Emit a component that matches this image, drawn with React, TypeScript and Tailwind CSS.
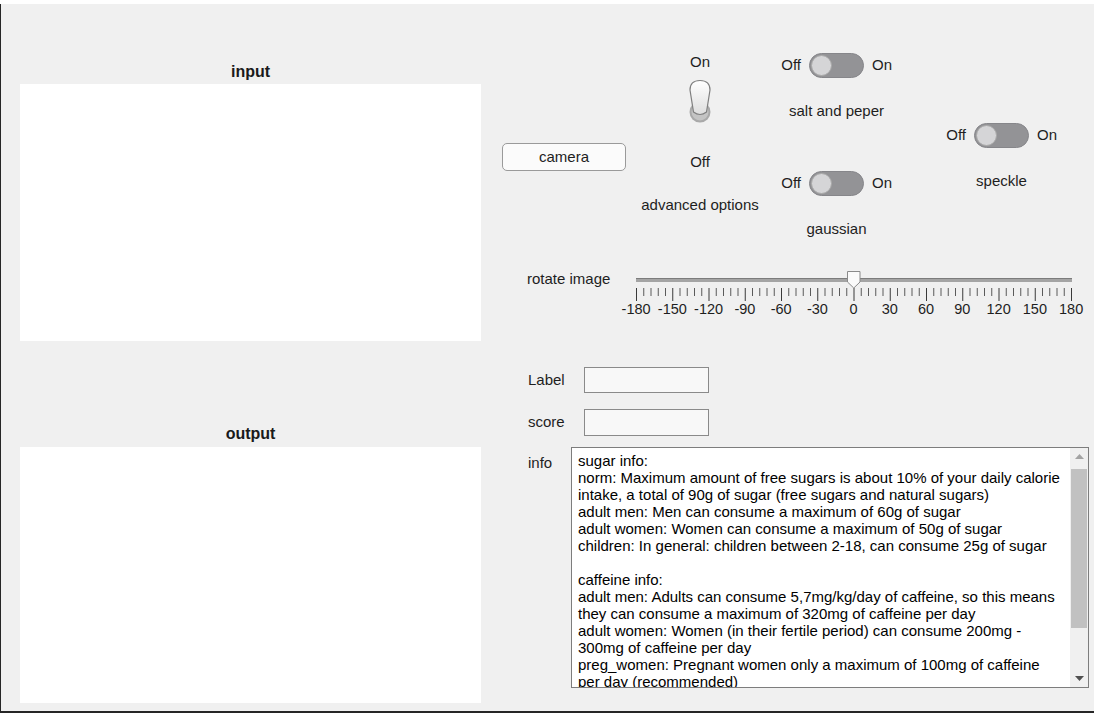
import React from 'react';

const infoLines = [
  'sugar info:',
  'norm: Maximum amount of free sugars is about 10% of your daily calorie',
  'intake, a total of 90g of sugar (free sugars and natural sugars)',
  'adult men: Men can consume a maximum of 60g of sugar',
  'adult women: Women can consume a maximum of 50g of sugar',
  'children: In general: children between 2-18, can consume 25g of sugar',
  '',
  'caffeine info:',
  'adult men: Adults can consume 5,7mg/kg/day of caffeine, so this means',
  'they can consume a maximum of 320mg of caffeine per day',
  'adult women: Women (in their fertile period) can consume 200mg -',
  '300mg of caffeine per day',
  'preg_women: Pregnant women only a maximum of 100mg of caffeine',
  'per day (recommended)',
];

const tickLabels = ['-180', '-150', '-120', '-90', '-60', '-30', '0', '30', '60', '90', '120', '150', '180'];

function Switch({ label }: { label: string }) {
  return (
    <div className="flex flex-col items-center">
      <div className="flex items-center">
        <span className="w-[40px] pr-[8px] text-right">Off</span>
        <div className="flex h-[25px] w-[55px] items-center rounded-full border border-[#86868a] bg-[#939396] px-[1px]">
          <div className="h-[21px] w-[21px] rounded-full border border-[#a9a9a9] bg-[#d5d5d7]" />
        </div>
        <span className="w-[40px] pl-[8px]">On</span>
      </div>
      <span className="mt-[24px] whitespace-nowrap leading-[18px]">{label}</span>
    </div>
  );
}

function Lever() {
  return (
    <svg width="26" height="44" viewBox="0 0 26 44">
      <defs>
        <linearGradient id="lev" x1="0" y1="0" x2="0" y2="1">
          <stop offset="0" stopColor="#ffffff" />
          <stop offset="1" stopColor="#dedede" />
        </linearGradient>
      </defs>
      <circle cx="13" cy="33" r="10.5" fill="#a9a9a9" />
      <circle cx="13" cy="33" r="8.5" fill="#c4c4c4" />
      <path d="M3 11 Q3 1.5 13 1.5 Q23 1.5 23 11 L19.5 33 Q13 38 6.5 33 Z" fill="url(#lev)" stroke="#7f7f7f" strokeWidth="1.2" />
    </svg>
  );
}

function Ticks() {
  const lines = [];
  for (let i = 0; i <= 60; i++) {
    const x = 0.5 + (i * 435) / 60;
    const major = i % 5 === 0;
    lines.push(
      <line key={i} x1={x} x2={x} y1={0} y2={major ? 13 : 8} stroke={major ? '#3a3a3a' : '#5a5a5a'} strokeWidth="1" />,
    );
  }
  return (
    <svg width="437" height="13" className="block">
      {lines}
    </svg>
  );
}

export default function App() {
  return (
    <div className="flex h-[713px] w-[1094px] flex-col bg-white font-['Liberation_Sans',Arial,sans-serif] text-[15px] text-[#1e1e1e]">
      <div className="h-[4px]" />
      <div className="flex flex-1 border-b-2 border-l border-[#262626] bg-[#f0f0f0]">
        {/* image panels */}
        <div className="ml-[19px] flex w-[461px] flex-col">
          <div className="mt-[59px] h-[18px] text-center text-[16px] font-bold leading-[18px] text-[#1a1a1a]">input</div>
          <div className="mt-[3px] h-[257px] bg-white" />
          <div className="mt-[84px] h-[18px] text-center text-[16px] font-bold leading-[18px] text-[#1a1a1a]">output</div>
          <div className="mt-[4px] h-[256px] bg-white" />
        </div>

        {/* controls */}
        <div className="ml-[21px] flex flex-col">
          <div className="flex items-start">
            <div className="w-[124px] pt-[139px]">
              <button className="h-[28px] w-[124px] rounded-[5px] border border-[#9a9a9a] bg-[#fbfbfb] leading-[18px]">
                camera
              </button>
            </div>
            <div className="ml-[13px] flex w-[122px] flex-col items-center pt-[49px] leading-[18px]">
              <span>On</span>
              <div className="mt-[8px]">
                <Lever />
              </div>
              <span className="mt-[30px]">Off</span>
              <span className="mt-[25px] whitespace-nowrap">advanced options</span>
            </div>
            <div className="flex w-[151px] flex-col items-center pt-[49px]">
              <Switch label="salt and peper" />
              <div className="mt-[51px]">
                <Switch label="gaussian" />
              </div>
            </div>
            <div className="ml-[14px] w-[151px] pt-[119px]">
              <Switch label="speckle" />
            </div>
          </div>

          {/* slider */}
          <div className="mt-[31px] flex items-start">
            <div className="mt-[1px] w-[134px] whitespace-nowrap pl-[25px] leading-[18px]">rotate image</div>
            <div className="flex w-[437px] flex-col">
              <div className="relative h-[19px] w-[437px]">
                <div className="absolute left-0 top-[9px] h-[4px] w-[436px] border-t border-[#7c7c7c] bg-[#a4a4a4]" />
                <svg className="absolute left-[211px] top-[2px]" width="14" height="18" viewBox="0 0 14 18">
                  <path d="M0.5 0.5 H13 V11 L6.75 17 L0.5 11 Z" fill="#fafafa" stroke="#8a8a8a" strokeWidth="1" />
                </svg>
              </div>
              <Ticks />
              <div className="-ml-[18px] flex">
                {tickLabels.map((t) => (
                  <span key={t} className="w-[36.25px] shrink-0 text-center text-[14.5px] leading-[17px] whitespace-nowrap">
                    {t}
                  </span>
                ))}
              </div>
            </div>
          </div>

          {/* label / score / info */}
          <div className="mt-[49px] flex h-[26px] items-center">
            <span className="w-[82px] pl-[26px]">Label</span>
            <div className="h-[26px] w-[125px] border border-[#8a8a8a] bg-[#f8f8f8]" />
          </div>
          <div className="mt-[16px] flex h-[27px] items-center">
            <span className="w-[82px] pl-[26px]">score</span>
            <div className="h-[27px] w-[125px] border border-[#8a8a8a] bg-[#f8f8f8]" />
          </div>
          <div className="mt-[11px] flex items-start">
            <span className="mt-[7px] w-[69px] pl-[26px] leading-[18px]">info</span>
            <div className="flex h-[241px] w-[518px] border border-[#7d7d7d] bg-white">
              <div className="flex-1 overflow-hidden pl-[6px] pt-[4px] text-[15px] leading-[17px] text-black">
                {infoLines.map((l, i) => (
                  <div key={i} className="h-[17px] whitespace-pre">
                    {l}
                  </div>
                ))}
              </div>
              <div className="flex w-[18px] flex-col items-center bg-[#f0f0f0]">
                <div className="flex h-[17px] w-full items-center justify-center">
                  <svg width="9" height="5" viewBox="0 0 9 5">
                    <path d="M0 5 L4.5 0 L9 5 Z" fill="#a3a3a3" />
                  </svg>
                </div>
                <div className="mt-[4px] h-[159px] w-[16px] bg-[#c1c1c1]" />
                <div className="flex-1" />
                <div className="flex h-[17px] w-full items-center justify-center">
                  <svg width="9" height="5" viewBox="0 0 9 5">
                    <path d="M0 0 L9 0 L4.5 5 Z" fill="#505050" />
                  </svg>
                </div>
              </div>
            </div>
          </div>
        </div>
      </div>
    </div>
  );
}
